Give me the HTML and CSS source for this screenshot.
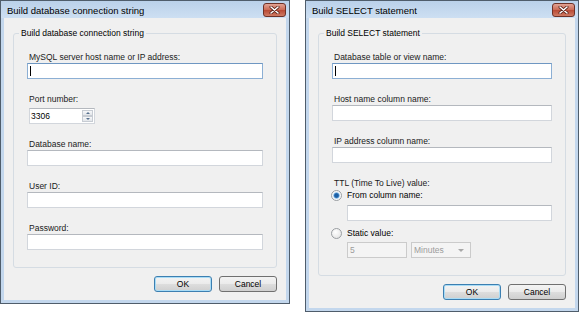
FILE: index.html
```html
<!DOCTYPE html>
<html lang="en">
<head>
    <meta charset="UTF-8">
    <title>Connection dialogs</title>
    <link rel="stylesheet" href="styles.css">
</head>
<body>
<div class="desk">

    <div class="window win-conn">
        <div class="titlebar">
            <span class="title">Build database connection string</span>
            <span class="close">
                <svg width="11" height="8" viewBox="0 0 11 8">
                    <path d="M2 1 L9 7 M9 1 L2 7" stroke="#5a231b" stroke-width="3" stroke-linecap="round"/>
                    <path d="M2 1 L9 7 M9 1 L2 7" stroke="#fff" stroke-width="1.5" stroke-linecap="round"/>
                </svg>
            </span>
        </div>
        <div class="client">
            <fieldset class="group">
                <legend>Build database connection string</legend>
                <div class="group-body">
                    <label class="field-label">MySQL server host name or IP address:</label>
                    <div class="textbox focused"><span class="caret"></span></div>

                    <label class="field-label">Port number:</label>
                    <div class="spinbox">
                        <span class="spin-value">3306</span>
                        <span class="spin-buttons">
                            <span class="spin-btn"><span class="arrow-up"></span></span>
                            <span class="spin-btn"><span class="arrow-down"></span></span>
                        </span>
                    </div>

                    <label class="field-label">Database name:</label>
                    <div class="textbox"></div>

                    <label class="field-label">User ID:</label>
                    <div class="textbox"></div>

                    <label class="field-label">Password:</label>
                    <div class="textbox last"></div>
                </div>
            </fieldset>
            <div class="buttons">
                <button class="btn default">OK</button>
                <button class="btn">Cancel</button>
            </div>
        </div>
    </div>

    <div class="window win-select">
        <div class="titlebar">
            <span class="title">Build SELECT statement</span>
            <span class="close">
                <svg width="11" height="8" viewBox="0 0 11 8">
                    <path d="M2 1 L9 7 M9 1 L2 7" stroke="#5a231b" stroke-width="3" stroke-linecap="round"/>
                    <path d="M2 1 L9 7 M9 1 L2 7" stroke="#fff" stroke-width="1.5" stroke-linecap="round"/>
                </svg>
            </span>
        </div>
        <div class="client">
            <fieldset class="group">
                <legend>Build SELECT statement</legend>
                <div class="group-body">
                    <label class="field-label">Database table or view name:</label>
                    <div class="textbox focused"><span class="caret"></span></div>

                    <label class="field-label">Host name column name:</label>
                    <div class="textbox"></div>

                    <label class="field-label">IP address column name:</label>
                    <div class="textbox"></div>

                    <label class="field-label">TTL (Time To Live) value:</label>
                    <div class="radio-row">
                        <span class="radio checked"></span>
                        <span>From column name:</span>
                    </div>
                    <div class="textbox indented"></div>

                    <div class="radio-row second">
                        <span class="radio"></span>
                        <span>Static value:</span>
                    </div>
                    <div class="static-row">
                        <div class="textbox disabled">5</div>
                        <div class="combo disabled">
                            <span>Minutes</span>
                            <span class="combo-arrow"></span>
                        </div>
                    </div>
                </div>
            </fieldset>
            <div class="buttons">
                <button class="btn default">OK</button>
                <button class="btn">Cancel</button>
            </div>
        </div>
    </div>

</div>
</body>
</html>
```

FILE: styles.css
```css
* {
    box-sizing: border-box;
}
body {
    margin: 0;
    background-color: #fff;
    font-family: "Liberation Sans", Arial, sans-serif;
    font-size: 8.5px;
    color: #000;
}
.desk {
    display: flex;
    align-items: flex-start;
    gap: 15px;
}

/* window frame */
.window {
    display: flex;
    flex-direction: column;
    border: 1px solid #4f5d6b;
    background-color: #c3d7ed;
}
.win-conn {
    width: 290px;
}
.win-select {
    width: 274px;
}
.titlebar {
    height: 17px;
    display: flex;
    align-items: center;
    justify-content: space-between;
    padding: 1px 3px 0 6px;
    background: linear-gradient(#bad1ea, #cddff2);
}
.title {
    font-size: 9.5px;
    color: #000;
}
.close {
    width: 23px;
    height: 14px;
    display: flex;
    align-items: center;
    justify-content: center;
    border: 1px solid #6e3127;
    border-radius: 3px;
    background: linear-gradient(#e2a394, #cc6b56 48%, #b94a35 52%, #cf7a63);
}
.client {
    margin: 0 3px 3px;
    padding: 9px 9px 8px;
    background-color: #f0f0f0;
}

/* group box */
.group {
    margin: 0;
    padding: 12px 13px 17px;
    border: 1px solid #d5dce3;
    border-radius: 3px;
    min-width: 0;
}
.group legend {
    margin-left: -8px;
    padding: 0 2px;
    line-height: 12px;
}
.group-body {
    display: flex;
    flex-direction: column;
}
.field-label {
    display: block;
    line-height: 12px;
    padding-left: 2px;
    color: #1a1a1a;
}

/* inputs */
.textbox {
    height: 16px;
    margin-bottom: 14px;
    background-color: #fff;
    border: 1px solid #d2d6dc;
    border-top-color: #b4b8be;
}
.textbox.last {
    margin-bottom: 0;
}
.textbox.focused {
    border-color: #8cafd4;
    border-top-color: #6f97c2;
    padding: 2px 0 0 2px;
}
.caret {
    display: block;
    width: 1px;
    height: 10px;
    background-color: #000;
}
.textbox.indented {
    margin: 4px 0 0 15px;
}
.textbox.disabled,
.combo.disabled {
    width: 60px;
    height: 16px;
    margin: 0;
    background-color: #f4f4f4;
    border: 1px solid #cbcbcb;
    color: #9c9c9c;
    line-height: 14px;
    padding-left: 2px;
}
.spinbox {
    width: 66px;
    height: 16px;
    margin: 3px 0 14px 2px;
    display: flex;
    justify-content: space-between;
    background-color: #fff;
    border: 1px solid #d2d6dc;
    border-top-color: #b4b8be;
}
.spin-value {
    line-height: 14px;
    padding-left: 1px;
}
.spin-buttons {
    width: 12px;
    display: flex;
    flex-direction: column;
    padding: 1px 1px 1px 0;
}
.spin-btn {
    flex: 1;
    display: flex;
    align-items: center;
    justify-content: center;
    border: 1px solid #c7ccd3;
    background: linear-gradient(#f6f7f9, #e3e6ea);
}
.arrow-up,
.arrow-down {
    width: 0;
    height: 0;
    border-left: 2px solid transparent;
    border-right: 2px solid transparent;
}
.arrow-up {
    border-bottom: 2px solid #56708e;
}
.arrow-down {
    border-top: 2px solid #56708e;
}

/* radios */
.radio-row {
    display: flex;
    align-items: center;
    gap: 5px;
    height: 12px;
    margin-left: -1px;
}
.radio-row.second {
    margin-top: 6px;
}
.radio {
    width: 11px;
    height: 11px;
    border-radius: 50%;
    border: 1px solid #9a9ea2;
    background: radial-gradient(circle at 40% 35%, #fff, #dedede);
}
.radio.checked {
    background: radial-gradient(circle, #1d5fa4 0 1.8px, #5a9fdc 2.6px, #e7eef5 3.4px, #fff 4.5px);
}
.static-row {
    display: flex;
    gap: 4px;
    margin: 3px 0 0 15px;
}
.combo {
    display: flex;
    align-items: center;
    justify-content: space-between;
    padding-right: 6px;
}
.combo-arrow {
    width: 0;
    height: 0;
    border-left: 3px solid transparent;
    border-right: 3px solid transparent;
    border-top: 3px solid #a8a8a8;
}

/* buttons */
.buttons {
    display: flex;
    justify-content: flex-end;
    gap: 7px;
    margin-top: 8px;
}
.btn {
    width: 58px;
    height: 16px;
    padding: 0;
    font-family: inherit;
    font-size: 8.5px;
    color: #000;
    border: 1px solid #707070;
    border-radius: 3px;
    background: linear-gradient(#f3f3f3, #ebebeb 48%, #dddddd 52%, #cfcfcf);
}
.btn.default {
    border-color: #3c7fb1;
    box-shadow: inset 0 0 0 1px #a9dcf6;
}
```
